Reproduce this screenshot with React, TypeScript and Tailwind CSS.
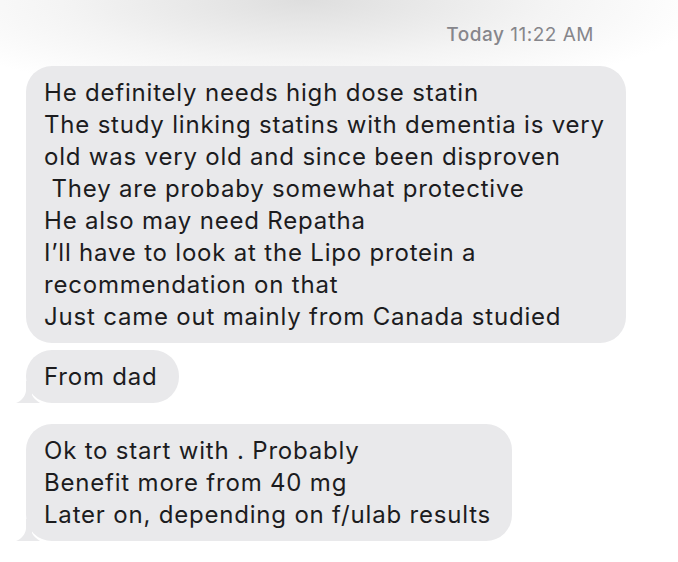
import React from "react";

const Tail = () => (
  <svg
    className="absolute bottom-0 left-[-10px]"
    width="24"
    height="22"
    viewBox="0 0 24 22"
  >
    <path
      d="M10 0 L16 0 L16 14 C17 17 20 19 24 22 L0 22 C5 20 9 16 10 10 Z"
      fill="#e9e9eb"
    />
  </svg>
);

const Bubble = ({ lines, tail }: { lines: string[]; tail?: boolean }) => (
  <div className="relative w-fit rounded-[26px] bg-[#e9e9eb] pl-[18px] pr-[21px] py-[10.5px]">
    {tail && <Tail />}
    <div className="relative text-[24px] leading-[32px] tracking-[0.8px] text-[#1c1c1e]">
      {lines.map((l, i) => (
        <div key={i} className="whitespace-pre">
          {l}
        </div>
      ))}
    </div>
  </div>
);

export default function App() {
  return (
    <div
      className="w-[678px] h-[562px] overflow-hidden bg-white bg-[radial-gradient(ellipse_60%_100px_at_45%_0%,#dedede,#f4f4f4_60%,#ffffff)]"
      style={{ fontFamily: "Inter, 'Noto Sans', sans-serif" }}
    >
      <div className="flex justify-end pr-[84px] pt-[23px] h-[66px]">
        <div className="text-[19px] leading-[24px] tracking-[0.5px] text-[#86868b]">
          <span className="font-medium">Today</span> 11:22 AM
        </div>
      </div>
      <div className="flex flex-col pl-[26px]">
        <Bubble
          lines={[
            "He definitely needs high dose statin",
            "The study linking statins with dementia is very",
            "old was very old and since been disproven",
            " They are probaby somewhat protective",
            "He also may need Repatha",
            "I\u2019ll have to look at the Lipo protein a",
            "recommendation on that",
            "Just came out mainly from Canada studied",
          ]}
        />
        <div className="h-[7px]" />
        <Bubble lines={["From dad"]} tail />
        <div className="h-[21px]" />
        <Bubble
          lines={[
            "Ok to start with . Probably",
            "Benefit more from 40 mg",
            "Later on, depending on f/ulab results",
          ]}
          tail
        />
      </div>
    </div>
  );
}
